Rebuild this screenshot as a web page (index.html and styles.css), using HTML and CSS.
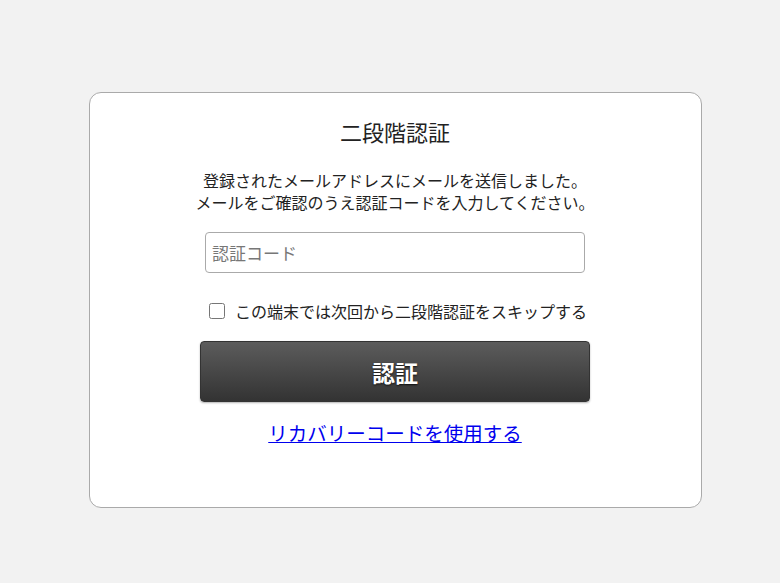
FILE: index.html
```html
<!DOCTYPE html>
<html lang="ja">
<head>
    <meta charset="UTF-8">
    <meta name="viewport" content="width=device-width, initial-scale=1.0">
    <title>二段階認証</title>
    <link rel="stylesheet" href="styles.css">
</head>
<body>
    <div class="page">
        <form class="card">
            <h1 class="card-title">二段階認証</h1>
            <p class="lead">登録されたメールアドレスにメールを送信しました。<br>メールをご確認のうえ認証コードを入力してください。</p>
            <input class="code-input" type="text" placeholder="認証コード">
            <label class="remember">
                <input type="checkbox">
                <span>この端末では次回から二段階認証をスキップする</span>
            </label>
            <button class="submit" type="button">認証</button>
            <a class="recovery" href="#">リカバリーコードを使用する</a>
        </form>
    </div>
</body>
</html>
```

FILE: styles.css
```css
* {
    box-sizing: border-box;
    margin: 0;
    padding: 0;
}
html, body {
    background-color: #f2f2f2;
    font-family: "Noto Sans CJK JP", "Noto Sans", sans-serif;
    color: #222;
    height: 100%;
}
.page {
    display: flex;
    justify-content: center;
    padding-top: 92px;
    padding-left: 10px;
}
.card {
    width: 613px;
    height: 416px;
    background: #fff;
    border: 1px solid #aaa;
    border-radius: 12px;
    display: flex;
    flex-direction: column;
    align-items: center;
    padding-top: 24px;
}
.card-title {
    font-size: 22px;
    font-weight: normal;
    line-height: 28px;
}
.lead {
    margin-top: 24px;
    font-size: 16px;
    line-height: 22px;
    text-align: center;
}
.code-input {
    margin-top: 19px;
    width: 380px;
    height: 41px;
    border: 1px solid #aaa;
    border-radius: 4px;
    padding: 0 6px;
    font-family: inherit;
    font-size: 17px;
    color: #222;
}
.code-input::placeholder {
    color: #777;
}
.remember {
    margin-top: 26px;
    display: flex;
    align-items: center;
    font-size: 16px;
    line-height: 24px;
    margin-left: 6px;
}
.remember input {
    width: 16px;
    height: 16px;
    margin-right: 10px;
}
.submit {
    margin-top: 18px;
    width: 390px;
    height: 61px;
    border: 1px solid #333;
    border-radius: 4px;
    background: linear-gradient(to bottom, #5c5c5c, #333);
    color: #fff;
    font-family: inherit;
    font-size: 23px;
    font-weight: bold;
    text-shadow: 0 1px 2px rgba(0, 0, 0, 0.8);
    box-shadow: 0 1px 2px rgba(0, 0, 0, 0.3);
    cursor: pointer;
}
.recovery {
    margin-top: 17px;
    font-size: 19.5px;
    line-height: 28px;
    color: #00e;
}
```
